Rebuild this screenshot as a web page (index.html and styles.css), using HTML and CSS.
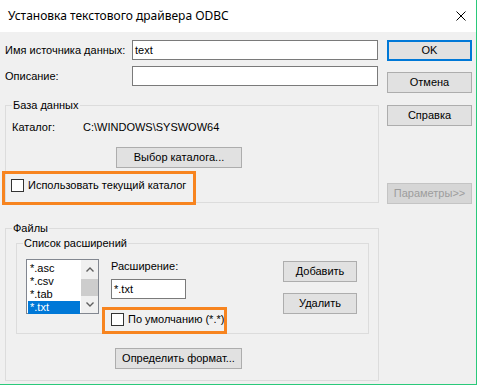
FILE: index.html
```html
<!DOCTYPE html>
<html lang="ru">
<head>
<meta charset="utf-8">
<title>ODBC</title>
<link rel="stylesheet" href="styles.css">
</head>
<body>
<div class="window">
  <div class="titlebar">
    <span class="title">Установка текстового драйвера ODBC</span>
    <svg class="close" width="10" height="10" viewBox="0 0 10 10"><path d="M0.5 0.5L9.5 9.5M9.5 0.5L0.5 9.5" stroke="#000" stroke-width="1" fill="none"/></svg>
  </div>
  <div class="client">
    <div class="main">
      <div class="field-row first">
        <span class="field-label">Имя источника данных:</span>
        <div class="textbox wide">text</div>
      </div>
      <div class="field-row second">
        <span class="field-label">Описание:</span>
        <div class="textbox wide"></div>
      </div>
      <div class="group db">
        <div class="legend">База данных</div>
        <div class="catalog-row"><span class="catalog-label">Каталог:</span><span>C:\WINDOWS\SYSWOW64</span></div>
        <div class="btn choose">Выбор каталога...</div>
        <div class="check hl hl-current"><span class="box"></span><span class="check-text">Использовать текущий каталог</span></div>
      </div>
      <div class="group files">
        <div class="legend">Файлы</div>
        <div class="group ext">
          <div class="legend">Список расширений</div>
          <div class="ext-body">
            <div class="listbox">
              <div class="items">
                <div class="item">*.asc</div>
                <div class="item">*.csv</div>
                <div class="item">*.tab</div>
                <div class="item selected">*.txt</div>
              </div>
              <div class="scrollbar">
                <div class="sb-btn up"><svg width="8" height="5" viewBox="0 0 8 5"><path d="M0.5 4.5L4 1L7.5 4.5" stroke="#606060" stroke-width="1.4" fill="none"/></svg></div>
                <div class="sb-thumb"></div>
                <div class="sb-btn down"><svg width="8" height="5" viewBox="0 0 8 5"><path d="M0.5 0.5L4 4L7.5 0.5" stroke="#606060" stroke-width="1.4" fill="none"/></svg></div>
              </div>
            </div>
            <div class="ext-mid">
              <div class="ext-label">Расширение:</div>
              <div class="textbox ext-input">*.txt</div>
              <div class="check hl hl-default"><span class="box"></span><span class="check-text">По умолчанию (*.*)</span></div>
            </div>
            <div class="ext-buttons">
              <div class="btn small add">Добавить</div>
              <div class="btn small del">Удалить</div>
            </div>
          </div>
        </div>
        <div class="btn format">Определить формат...</div>
      </div>
    </div>
    <div class="side">
      <div class="btn side-btn default ok">OK</div>
      <div class="btn side-btn cancel">Отмена</div>
      <div class="btn side-btn help">Справка</div>
      <div class="btn side-btn disabled params">Параметры&gt;&gt;</div>
    </div>
  </div>
</div>
</body>
</html>
```

FILE: styles.css
```css
*, *::before, *::after { box-sizing: border-box; }
html, body { margin: 0; padding: 0; }
body {
  width: 479px;
  height: 386px;
  overflow: hidden;
  background: #ffffff;
  font-family: "Liberation Sans", Arial, sans-serif;
  font-size: 11px;
  color: #000;
}
.window {
  width: 477px;
  height: 385px;
  background: #f0f0f0;
  border-right: 1px solid #2ac97a;
  border-bottom: 1px solid #2ac97a;
}
.titlebar {
  height: 32px;
  background: #ffffff;
  display: flex;
  align-items: center;
  padding-left: 8px;
}
.title {
  flex: 1;
  font-family: "Noto Sans", sans-serif;
  font-size: 12px;
  line-height: 16px;
  padding-bottom: 1px;
}
.close { margin-right: 10px; margin-bottom: 1px; }
.client { display: flex; }
.main { width: 379px; padding-left: 5px; }
.side { width: 85px; margin-left: 8px; display: flex; flex-direction: column; }

.field-row { display: flex; align-items: center; height: 20px; }
.field-row.first { margin-top: 8px; }
.field-row.second { margin-top: 6px; }
.field-label { width: 127px; line-height: 13px; }
.textbox {
  height: 20px;
  border: 1px solid #7a7a7a;
  background: #fff;
  padding-left: 2px;
  line-height: 18px;
  white-space: nowrap;
}
.wide { width: 246px; }

.group { border: 1px solid #dcdcdc; }
.legend {
  width: max-content;
  height: 13px;
  line-height: 13px;
  margin: -7px 0 0 6px;
  padding: 0 1px;
  background: #f0f0f0;
}
.db { margin-top: 19px; height: 98px; }
.catalog-row { display: flex; margin-top: 9px; height: 13px; line-height: 13px; padding-left: 6px; }
.catalog-label { width: 71px; }

.btn {
  display: flex;
  align-items: center;
  justify-content: center;
  height: 21px;
  background: #e1e1e1;
  border: 1px solid #adadad;
  line-height: 13px;
  white-space: nowrap;
}
.choose { margin-top: 13px; margin-left: 110px; width: 126px; }

.check { position: relative; display: flex; align-items: center; height: 13px; width: max-content; white-space: nowrap; }
.check .box { width: 13px; height: 13px; border: 1px solid #333; background: #fff; }
.check-text { margin-left: 4px; line-height: 13px; }
.hl::after {
  content: "";
  position: absolute;
  border: 3px solid #f7841f;
}
.db .check { margin-top: 11px; margin-left: 5px; }
.hl-current::after { left: -9px; top: -8px; width: 194px; height: 34px; }
.hl-default::after { left: -9px; top: -6px; width: 125px; height: 27px; }

.files { margin-top: 25px; height: 153px; }
.ext { margin: 8px 9px 0 10px; height: 91px; }
.ext-body { display: flex; align-items: flex-start; margin-top: 9px; }
.listbox {
  display: flex;
  margin-left: 9px;
  width: 73px;
  height: 55px;
  border: 1px solid #828790;
  background: #fff;
}
.items { flex: 1; padding: 2px 1px 0 1px; }
.item { height: 13px; line-height: 13px; padding-left: 2px; }
.item.selected { background: #0078d7; color: #fff; }
.scrollbar { width: 17px; background: #f0f0f0; display: flex; flex-direction: column; }
.sb-btn { display: flex; align-items: center; justify-content: center; }
.sb-btn.up { height: 19px; }
.sb-btn.down { height: 17px; }
.sb-thumb { height: 17px; background: #cdcdcd; }

.ext-mid { width: 172px; margin-left: 12px; display: flex; flex-direction: column; }
.ext-label { margin-top: 1px; height: 13px; line-height: 13px; }
.ext-input { margin-top: 6px; width: 75px; }
.ext-mid .check { margin-top: 14px; }
.ext-buttons { display: flex; flex-direction: column; }
.small { width: 74px; }
.add { margin-top: 2px; }
.del { margin-top: 11px; }
.format { margin-top: 14px; margin-left: 109px; width: 127px; }

.side-btn { width: 85px; }
.ok { margin-top: 8px; border: 2px solid #0078d7; }
.cancel { margin-top: 11px; }
.help { margin-top: 12px; }
.params { margin-top: 57px; }
.disabled { background: #d6d6d6; border-color: #c4c4c4; color: #9d9d9d; }
```
